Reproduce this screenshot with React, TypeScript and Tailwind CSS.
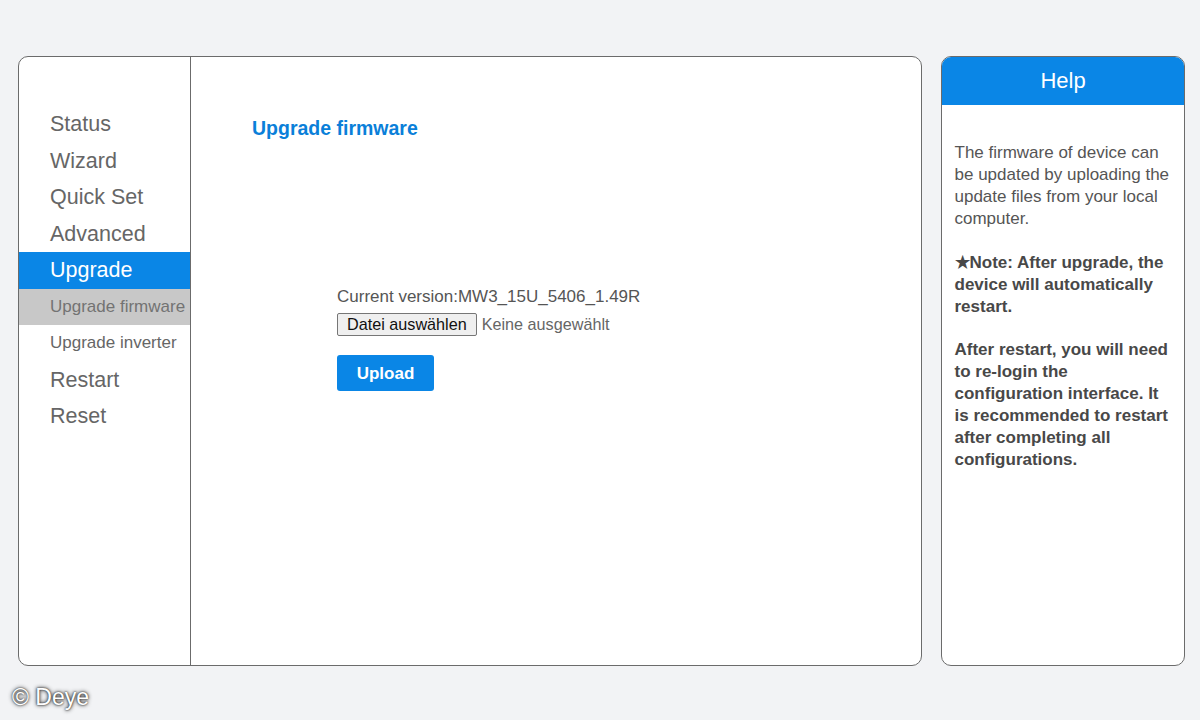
export default function App() {
  const nav = [
    { label: "Status", sub: false },
    { label: "Wizard", sub: false },
    { label: "Quick Set", sub: false },
    { label: "Advanced", sub: false },
    { label: "Upgrade", sub: false, active: true },
    { label: "Upgrade firmware", sub: true, current: true },
    { label: "Upgrade inverter", sub: true },
    { label: "Restart", sub: false },
    { label: "Reset", sub: false },
  ];

  return (
    <div className="min-h-[720px] w-[1200px] bg-[#f2f3f5] pt-[56px] pl-[18px] font-['Liberation_Sans',Arial,sans-serif]">
      <div className="flex gap-[19px]">
        {/* main panel */}
        <div className="flex h-[610px] w-[904px] overflow-hidden rounded-[10px] border-[1.5px] border-[#6b6b6b] bg-white">
          <div className="w-[172px] shrink-0 border-r-[1.5px] border-[#6b6b6b] pt-[49px]">
            {nav.map((item) => (
              <div
                key={item.label}
                className={
                  "h-[36.5px] whitespace-nowrap pl-[31px] " +
                  (item.sub ? "text-[17px] leading-[36.5px] " : "text-[21.5px] leading-[36.5px] ") +
                  (item.active
                    ? "bg-[#0a86e6] text-white"
                    : item.current
                    ? "bg-[#c8c8c8] text-[#737373]"
                    : "text-[#666666]")
                }
              >
                {item.label}
              </div>
            ))}
          </div>

          <div className="flex-1 pt-[59px] pl-[61px]">
            <h1 className="text-[19.5px] font-bold leading-[24px] text-[#0a7fd9]">
              Upgrade firmware
            </h1>
            <div className="mt-[147px] pl-[85px]">
              <div className="text-[17px] leading-[20px] text-[#555555]">
                Current version:MW3_15U_5406_1.49R
              </div>
              <div className="mt-[5px] flex items-center gap-[5px]">
                <button className="h-[23px] rounded-[2px] border border-[#767676] bg-[#efefef] px-[9px] text-[16.2px] leading-[20px] text-[#111111]">
                  Datei auswählen
                </button>
                <span className="text-[16.2px] text-[#666666]">Keine ausgewählt</span>
              </div>
              <button className="mt-[19px] h-[36px] w-[97px] rounded-[3px] bg-[#0a86e6] text-[17px] font-bold text-white">
                Upload
              </button>
            </div>
          </div>
        </div>

        {/* help panel */}
        <div className="h-[610px] w-[244px] overflow-hidden rounded-[10px] border-[1.5px] border-[#6b6b6b] bg-white">
          <div className="-mx-[1.5px] -mt-[1.5px] flex h-[49px] items-center justify-center bg-[#0a86e6] text-[22px] text-white">
            Help
          </div>
          <div className="px-[12.5px] pt-[37px] text-[17px] leading-[22px] text-[#555555]">
            <p>
              The firmware of device can be updated by uploading the update
              files from your local computer.
            </p>
            <p className="mt-[22px] font-bold text-[#484848]">
              ★Note: After upgrade, the device will automatically restart.
            </p>
            <p className="mt-[21px] font-bold text-[#484848]">
              After restart, you will need to re-login the configuration
              interface. It is recommended to restart after completing all
              configurations.
            </p>
          </div>
        </div>
      </div>

      <div className="mt-[17px] -ml-[6px] pb-[8px] text-[23px] leading-[28px] text-white [text-shadow:0_0_4px_rgba(0,0,0,0.9),0_0_2px_rgba(0,0,0,0.9)]">
        © Deye
      </div>
    </div>
  );
}
